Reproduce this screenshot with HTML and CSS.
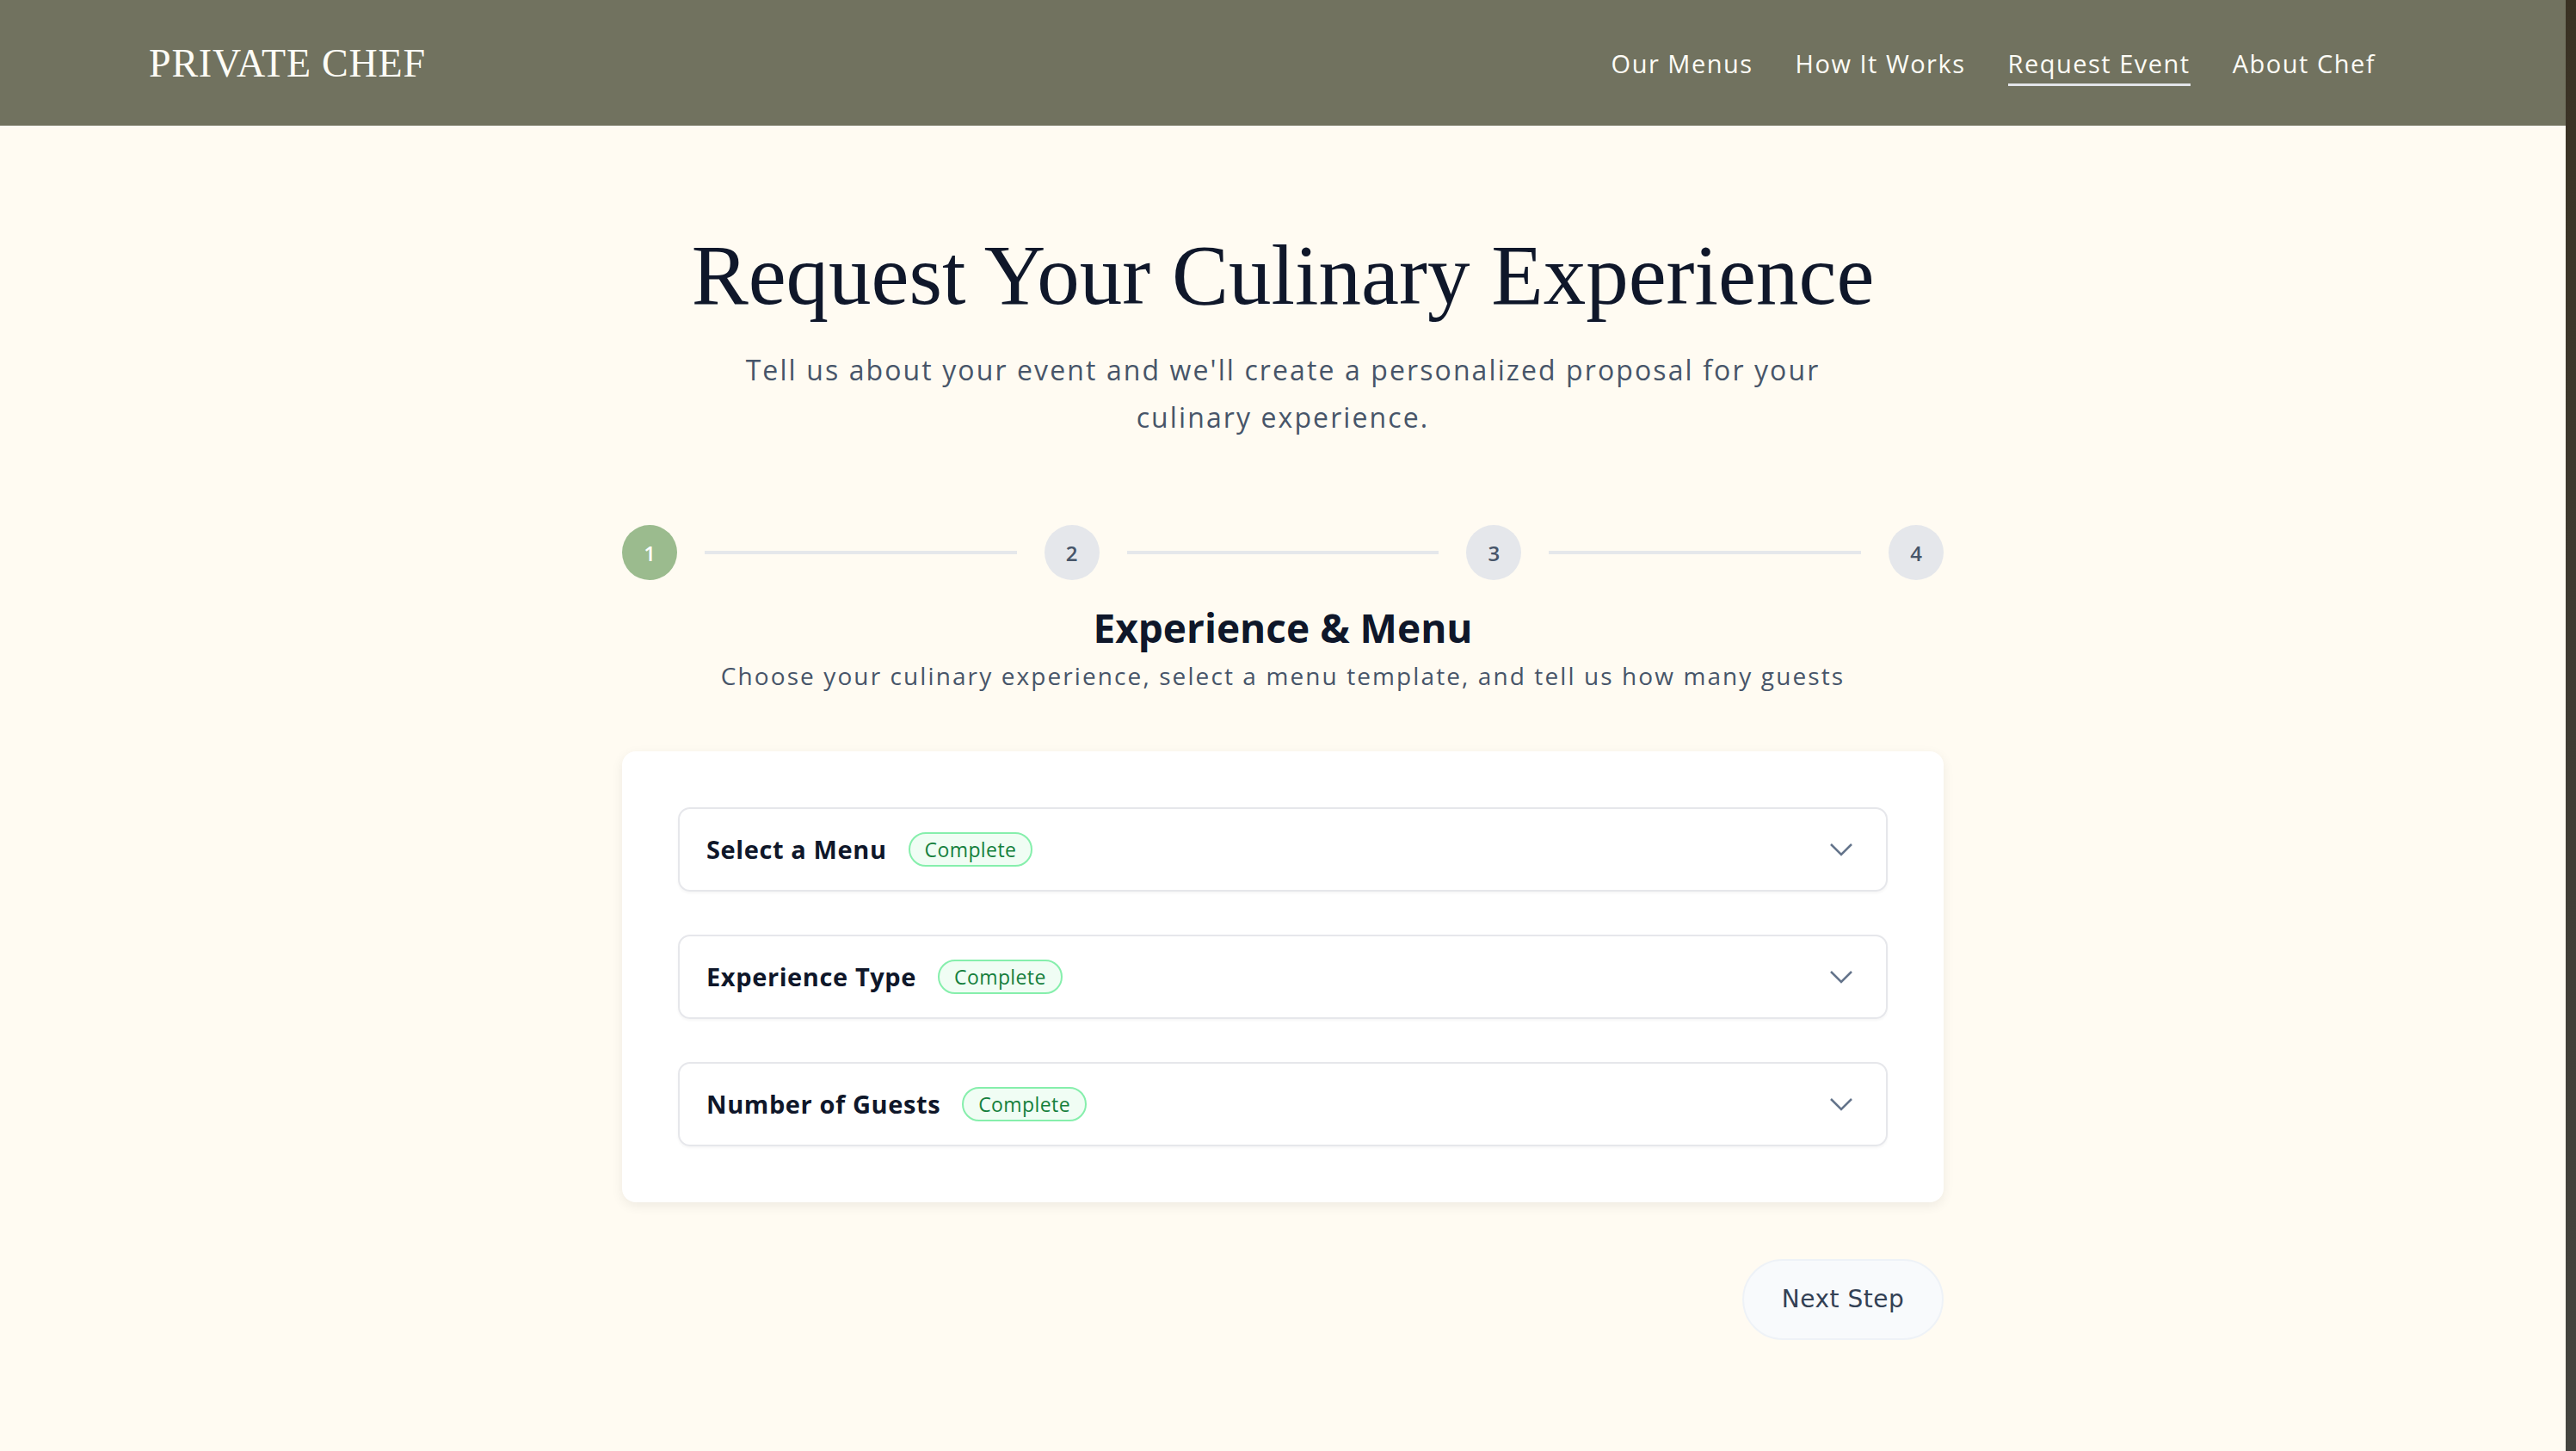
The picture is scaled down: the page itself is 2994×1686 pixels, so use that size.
FILE: index.html
```html
<!DOCTYPE html>
<html lang="en">
<head>
    <meta charset="UTF-8">
    <meta name="viewport" content="width=device-width, initial-scale=1.0">
    <title>Request Event - Private Chef</title>
    <link rel="stylesheet" href="styles.css">
</head>
<body>
    <div class="screen">
        <div class="page">
            <header class="site-header">
                <a href="#" class="logo">PRIVATE CHEF</a>
                <nav class="main-nav">
                    <a href="#">Our Menus</a>
                    <a href="#">How It Works</a>
                    <a href="#" class="active">Request Event</a>
                    <a href="#">About Chef</a>
                </nav>
            </header>

            <main class="request">
                <h1>Request Your Culinary Experience</h1>
                <p class="intro">Tell us about your event and we'll create a personalized proposal for your culinary experience.</p>

                <div class="wizard">
                    <div class="steps">
                        <span class="step current">1</span>
                        <span class="step-line"></span>
                        <span class="step">2</span>
                        <span class="step-line"></span>
                        <span class="step">3</span>
                        <span class="step-line"></span>
                        <span class="step">4</span>
                    </div>

                    <h2>Experience &amp; Menu</h2>
                    <p class="step-desc">Choose your culinary experience, select a menu template, and tell us how many guests</p>

                    <div class="card">
                        <div class="section">
                            <span class="section-title">Select a Menu</span>
                            <span class="badge">Complete</span>
                            <svg class="chevron" width="28" height="16" viewBox="0 0 28 16"><path d="M2 2 L14 14 L26 2"/></svg>
                        </div>
                        <div class="section">
                            <span class="section-title">Experience Type</span>
                            <span class="badge">Complete</span>
                            <svg class="chevron" width="28" height="16" viewBox="0 0 28 16"><path d="M2 2 L14 14 L26 2"/></svg>
                        </div>
                        <div class="section">
                            <span class="section-title">Number of Guests</span>
                            <span class="badge">Complete</span>
                            <svg class="chevron" width="28" height="16" viewBox="0 0 28 16"><path d="M2 2 L14 14 L26 2"/></svg>
                        </div>
                    </div>

                    <div class="actions">
                        <button type="button" class="next-btn">Next Step</button>
                    </div>
                </div>
            </main>
        </div>
        <div class="edge"></div>
    </div>
</body>
</html>
```

FILE: styles.css
```css
body {
    margin: 0;
    padding: 0;
    background-color: #fffbf2;
    color: #0f172a;
    font-family: "Open Sans", Lato, sans-serif;
}

.screen {
    display: flex;
    min-height: 100vh;
}

.page {
    flex: 1;
}

/* dark strip along the right side of the window */
.edge {
    width: 12px;
    background: linear-gradient(#3a3223, #3f3b33 50%, #44443f);
}

/* header */
.site-header {
    height: 146px;
    box-sizing: border-box;
    background-color: #71725f;
    display: flex;
    align-items: center;
    justify-content: space-between;
    padding: 0 221px 0 173px;
}

.logo {
    font-family: "Liberation Serif", serif;
    font-size: 46px;
    color: #fdfcf6;
    text-decoration: none;
    letter-spacing: 0.8px;
}

.main-nav {
    display: flex;
    gap: 49px;
    padding-top: 8px;
}

.main-nav a {
    font-size: 29px;
    letter-spacing: 1.5px;
    color: #fdfcf6;
    text-decoration: none;
    padding-bottom: 4px;
    border-bottom: 3px solid transparent;
}

.main-nav a.active {
    border-bottom-color: #e3e5e9;
}

/* page body */
.request {
    text-align: center;
    padding: 114px 0 120px;
}

h1 {
    font-family: "Liberation Serif", serif;
    font-weight: normal;
    font-size: 99px;
    line-height: 120px;
    color: #0f172a;
    margin: 0;
}

.intro {
    font-size: 32px;
    line-height: 55px;
    letter-spacing: 2.1px;
    color: #475569;
    max-width: 1320px;
    margin: 22px auto 0;
}

.wizard {
    width: 1536px;
    margin: 98px auto 0;
}

.steps {
    display: flex;
    align-items: center;
}

.step {
    width: 64px;
    height: 64px;
    border-radius: 50%;
    background-color: #e5e7eb;
    color: #475569;
    font-size: 24px;
    font-weight: 600;
    display: flex;
    align-items: center;
    justify-content: center;
}

.step.current {
    background-color: #9bbb8e;
    color: #fff;
}

.step-line {
    flex: 1;
    height: 4px;
    margin: 0 32px;
    background-color: #e5e7eb;
}

h2 {
    font-size: 46px;
    line-height: 1.2;
    font-weight: bold;
    color: #0f172a;
    margin: 28px 0 0;
}

.step-desc {
    font-size: 28px;
    line-height: 1.2;
    letter-spacing: 2.1px;
    color: #475569;
    margin: 12px 0 0;
}

.card {
    margin-top: 70px;
    background-color: #fff;
    border-radius: 16px;
    padding: 65px;
    box-shadow: 0 4px 14px rgba(0, 0, 0, 0.07);
    display: flex;
    flex-direction: column;
    gap: 50px;
    text-align: left;
}

.section {
    height: 98px;
    box-sizing: border-box;
    border: 2px solid #e6e7eb;
    border-radius: 14px;
    padding: 0 38px 0 31px;
    display: flex;
    align-items: center;
    box-shadow: 0 2px 3px rgba(0, 0, 0, 0.04);
}

.section-title {
    font-size: 29px;
    font-weight: bold;
    letter-spacing: 0.6px;
    color: #0f172a;
}

.badge {
    margin-left: 25px;
    height: 40px;
    box-sizing: border-box;
    padding: 0 17px;
    border: 2px solid #86efac;
    border-radius: 20px;
    background-color: #f0fdf4;
    color: #15803d;
    font-size: 23px;
    letter-spacing: 0.4px;
    display: flex;
    align-items: center;
}

.chevron {
    margin-left: auto;
    fill: none;
    stroke: #64748b;
    stroke-width: 2.5;
}

.actions {
    display: flex;
    justify-content: flex-end;
    margin-top: 66px;
}

.next-btn {
    width: 234px;
    height: 94px;
    border-radius: 47px;
    border: 2px solid #eef2f7;
    background-color: #f8fafc;
    color: #334155;
    font-family: "DejaVu Sans", sans-serif;
    font-size: 28px;
    letter-spacing: 0.5px;
    cursor: pointer;
}
```
